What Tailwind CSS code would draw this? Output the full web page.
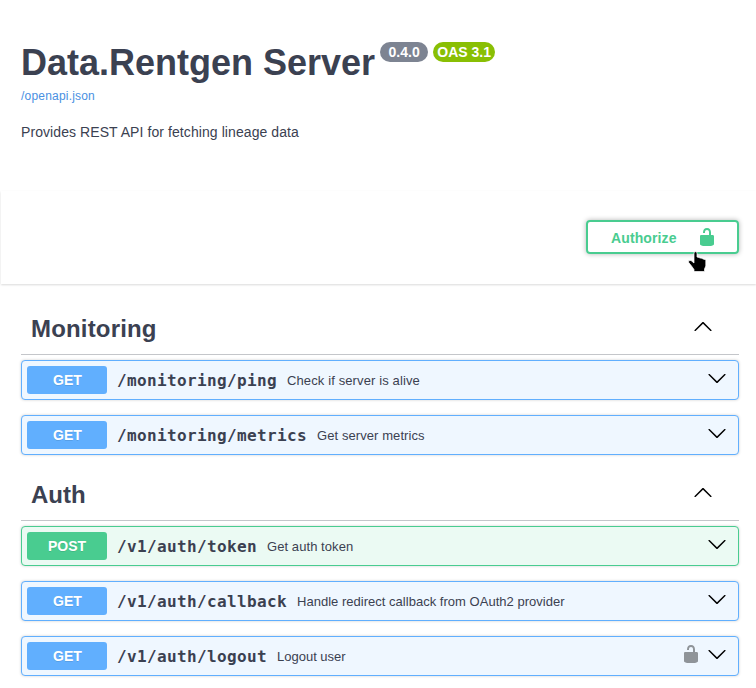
<!DOCTYPE html>
<html lang="en">
<head>
<meta charset="utf-8">
<title>Data.Rentgen Server</title>
<script src="https://cdn.jsdelivr.net/npm/@tailwindcss/browser@4"></script>
</head>
<body class="h-[688px] overflow-hidden bg-white font-['Liberation_Sans',Arial,sans-serif] text-[#3b4151]">
<svg class="hidden">
  <symbol id="down" viewBox="0 0 20 20"><path d="M17.418 6.109c.272-.268.709-.268.979 0s.271.701 0 .969l-7.908 7.83c-.27.268-.707.268-.979 0l-7.908-7.83c-.27-.268-.27-.701 0-.969.271-.268.709-.268.979 0L10 13.25l7.418-7.141z"/></symbol>
  <symbol id="up" viewBox="0 0 20 20"><path d="M17.418 14.908c.272.268.709.268.979 0s.271-.701 0-.969l-7.908-7.83c-.27-.268-.707-.268-.979 0l-7.908 7.83c-.27.268-.27.701 0 .969.271.268.709.268.979 0L10 7.767l7.418 7.141z"/></symbol>
  <symbol id="unlocked" viewBox="0 0 20 20"><path d="M15.8 8H14V5.6C14 2.703 12.665 1 10 1 7.334 1 6 2.703 6 5.6V6h2v-.801C8 3.754 8.797 3 10 3c1.203 0 2 .754 2 2.199V8H4c-.553 0-1 .646-1 1.199V17c0 .549.428 1.139.951 1.307l1.197.387C5.672 18.861 6.55 19 7.1 19h5.8c.549 0 1.428-.139 1.951-.307l1.196-.387c.524-.167.953-.757.953-1.306V9.199C17 8.646 16.352 8 15.8 8z"/></symbol>
</svg>
<header class="h-[191px] px-[21px] pt-[42px]">
  <div class="flex h-10 items-start">
    <h1 class="pt-px text-[36px] leading-10 font-bold whitespace-nowrap">Data.Rentgen Server</h1>
    <span class="ml-[5px] flex h-5 w-12 items-center justify-center rounded-full bg-[#7d8492] text-[14px] font-bold text-white">0.4.0</span>
    <span class="ml-[5px] flex h-5 w-[62px] items-center justify-center rounded-full bg-[#89bf04] text-[14px] font-bold whitespace-nowrap text-white">OAS 3.1</span>
  </div>
  <a class="mt-[6px] block text-[12px] leading-4 tracking-[0.2px] text-[#4990e2]">/openapi.json</a>
  <p class="mt-[18px] text-[14px] leading-5 tracking-[0.08px]">Provides REST API for fetching lineage data</p>
</header>
<section class="relative ml-px flex h-[93px] justify-end bg-white pt-[29px] pr-[17px] shadow-[0_1px_2px_0_rgba(0,0,0,0.15)]">
  <button class="flex h-[34px] w-[153px] items-center rounded-[4px] border-2 border-[#49cc90] pl-[23px] text-[14px] font-bold text-[#49cc90] shadow-[0_0_5px_rgba(0,0,0,0.3)]">
    <span class="w-[86px] pt-0.5 text-left tracking-[0.12px]">Authorize</span>
    <svg class="size-5 fill-[#49cc90]"><use href="#unlocked"/></svg>
  </button>
  <svg class="absolute top-[60px] left-[687px] h-[22px] w-[20px]" viewBox="0 0 20 22"><path d="M6 2Q6 .7 7.500 .7T9 2V6l2 .5 1 .5 2 .3 1 .7 2 .5.800 1V15l-1.300 3V20.500H6V18.500L3.500 15 .7 11.500V9.500H3L6 12z" fill="black" stroke="white" stroke-width=".7"/></svg>
</section>
<main class="px-[21px] pr-[17px]">
  <section>
    <h2 class="mt-[19px] flex h-[52px] items-center justify-between border-b border-[#3b4151]/30 pr-[26px] pl-[10px] text-[24px] font-bold tracking-[0.17px]">Monitoring <svg class="mb-[5px] size-5 fill-black"><use href="#up"/></svg></h2>
    <div class="mt-[5px] flex flex-col gap-[15px]">
      <div class="flex h-10 items-center rounded-[4px] border border-[#61affe] bg-[#eff7ff] px-[5px] pr-[11px] shadow-[0_0_3px_rgba(0,0,0,0.19)]">
        <span class="flex h-7 w-20 items-center justify-center rounded-[3px] bg-[#61affe] pl-px text-[14px] font-bold text-white [text-shadow:0_1px_0_rgba(0,0,0,0.1)]">GET</span>
        <span class="ml-[10px] pt-0.5 font-['DejaVu_Sans_Mono',monospace] text-[16px] font-bold tracking-[0.367px]">/monitoring/ping</span>
        <span class="ml-[10px] flex-1 pt-px text-[13px] tracking-[0.12px]">Check if server is alive</span>
        <svg class="mb-[4px] size-5 fill-black"><use href="#down"/></svg>
      </div>
      <div class="flex h-10 items-center rounded-[4px] border border-[#61affe] bg-[#eff7ff] px-[5px] pr-[11px] shadow-[0_0_3px_rgba(0,0,0,0.19)]">
        <span class="flex h-7 w-20 items-center justify-center rounded-[3px] bg-[#61affe] pl-px text-[14px] font-bold text-white [text-shadow:0_1px_0_rgba(0,0,0,0.1)]">GET</span>
        <span class="ml-[10px] pt-0.5 font-['DejaVu_Sans_Mono',monospace] text-[16px] font-bold tracking-[0.367px]">/monitoring/metrics</span>
        <span class="ml-[10px] flex-1 pt-px text-[13px] tracking-[0.08px]">Get server metrics</span>
        <svg class="mb-[4px] size-5 fill-black"><use href="#down"/></svg>
      </div>
    </div>
  </section>
  <section>
    <h2 class="mt-[14px] flex h-[52px] items-center justify-between border-b border-[#3b4151]/30 pr-[26px] pl-[10px] text-[24px] font-bold">Auth <svg class="mb-[5px] size-5 fill-black"><use href="#up"/></svg></h2>
    <div class="mt-[5px] flex flex-col gap-[15px]">
      <div class="flex h-10 items-center rounded-[4px] border border-[#49cc90] bg-[#ebfaf3] px-[5px] pr-[11px] shadow-[0_0_3px_rgba(0,0,0,0.19)]">
        <span class="flex h-7 w-20 items-center justify-center rounded-[3px] bg-[#49cc90] text-[14px] font-bold text-white [text-shadow:0_1px_0_rgba(0,0,0,0.1)]">POST</span>
        <span class="ml-[10px] pt-0.5 font-['DejaVu_Sans_Mono',monospace] text-[16px] font-bold tracking-[0.367px]">/v1/auth/token</span>
        <span class="ml-[10px] flex-1 pt-px text-[13px] tracking-[0.07px]">Get auth token</span>
        <svg class="mb-[4px] size-5 fill-black"><use href="#down"/></svg>
      </div>
      <div class="flex h-10 items-center rounded-[4px] border border-[#61affe] bg-[#eff7ff] px-[5px] pr-[11px] shadow-[0_0_3px_rgba(0,0,0,0.19)]">
        <span class="flex h-7 w-20 items-center justify-center rounded-[3px] bg-[#61affe] pl-px text-[14px] font-bold text-white [text-shadow:0_1px_0_rgba(0,0,0,0.1)]">GET</span>
        <span class="ml-[10px] pt-0.5 font-['DejaVu_Sans_Mono',monospace] text-[16px] font-bold tracking-[0.367px]">/v1/auth/callback</span>
        <span class="ml-[10px] flex-1 pt-px text-[13px] tracking-[0.02px]">Handle redirect callback from OAuth2 provider</span>
        <svg class="mb-[4px] size-5 fill-black"><use href="#down"/></svg>
      </div>
      <div class="flex h-10 items-center rounded-[4px] border border-[#61affe] bg-[#eff7ff] px-[5px] pr-[11px] shadow-[0_0_3px_rgba(0,0,0,0.19)]">
        <span class="flex h-7 w-20 items-center justify-center rounded-[3px] bg-[#61affe] pl-px text-[14px] font-bold text-white [text-shadow:0_1px_0_rgba(0,0,0,0.1)]">GET</span>
        <span class="ml-[10px] pt-0.5 font-['DejaVu_Sans_Mono',monospace] text-[16px] font-bold tracking-[0.367px]">/v1/auth/logout</span>
        <span class="ml-[10px] flex-1 pt-px text-[13px]">Logout user</span>
        <svg class="mr-[6px] mb-[4px] size-5 fill-black/40"><use href="#unlocked"/></svg>
        <svg class="mb-[4px] size-5 fill-black"><use href="#down"/></svg>
      </div>
    </div>
  </section>
</main>
</body>
</html>
